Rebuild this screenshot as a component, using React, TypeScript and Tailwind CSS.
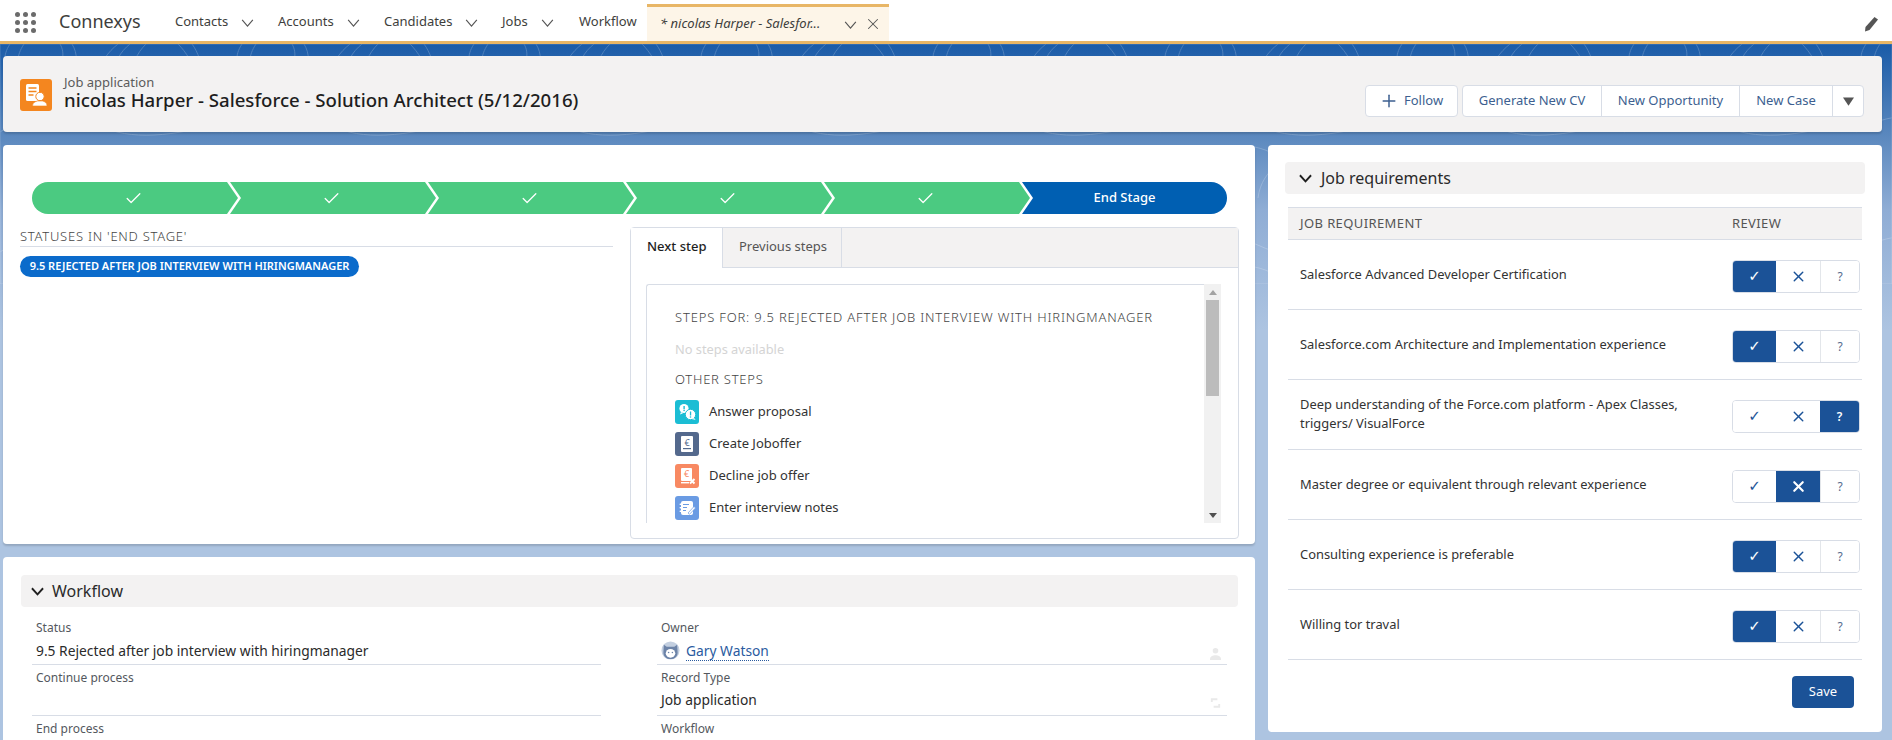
import { Check, X, Plus } from 'lucide-react';

const font = { fontFamily: '"Noto Sans", "Open Sans", sans-serif' };

const navItems = [
  { label: 'Contacts', w: 'w-[103px]' },
  { label: 'Accounts', w: 'w-[106px]' },
  { label: 'Candidates', w: 'w-[118px]' },
  { label: 'Jobs', w: 'w-[77px]' },
];

const requirements = [
  { text: 'Salesforce Advanced Developer Certification', sel: 0 },
  { text: 'Salesforce.com Architecture and Implementation experience', sel: 0 },
  { text: 'Deep understanding of the Force.com platform - Apex Classes, triggers/ VisualForce', sel: 2 },
  { text: 'Master degree or equivalent through relevant experience', sel: 1 },
  { text: 'Consulting experience is preferable', sel: 0 },
  { text: 'Willing tor traval', sel: 0 },
];

function Chevron({ className }: { className?: string }) {
  return (
    <svg viewBox="0 0 14 9" className={className} fill="none" stroke="currentColor">
      <path d="M1 1l6 7 6-7" strokeWidth="1.3" />
    </svg>
  );
}

function SectionChevron() {
  return (
    <svg viewBox="0 0 14 9" className="w-[13px] h-[9px] text-[#1f1f1f]" fill="none" stroke="currentColor">
      <path d="M1 1l6 6.5 6-6.5" strokeWidth="2" />
    </svg>
  );
}

function StepIcon({ kind }: { kind: string }) {
  if (kind === 'answer') {
    return (
      <svg viewBox="0 0 24 24" className="w-6 h-6 shrink-0">
        <rect width="24" height="24" rx="3" fill="#1bbdd4" />
        <circle cx="9" cy="8.5" r="4.6" fill="#fff" />
        <path d="M6 12l-1 2.5 3-1.2z" fill="#fff" />
        <circle cx="15.5" cy="14.500" r="5.2" fill="#fff" stroke="#1bbdd4" />
        <path d="M19 18l1.600 2-3.400-1z" fill="#fff" />
        <rect x="8.400" y="6" width="1.400" height="3" fill="#1bbdd4" />
        <circle cx="9.100" cy="10.400" r=".8" fill="#1bbdd4" />
        <rect x="14.900" y="11.500" width="1.300" height="4" fill="#1bbdd4" />
        <circle cx="15.500" cy="17" r=".8" fill="#1bbdd4" />
      </svg>
    );
  }
  if (kind === 'create') {
    return (
      <svg viewBox="0 0 24 24" className="w-6 h-6 shrink-0">
        <rect width="24" height="24" rx="3" fill="#54698d" />
        <rect x="6" y="4" width="12" height="16" rx="1" fill="#fff" />
        <text x="12" y="13.500" fontSize="9" textAnchor="middle" fill="#54698d" fontFamily="Noto Sans">€</text>
        <rect x="8" y="16" width="8" height="1.200" fill="#54698d" />
      </svg>
    );
  }
  if (kind === 'decline') {
    return (
      <svg viewBox="0 0 24 24" className="w-6 h-6 shrink-0">
        <rect width="24" height="24" rx="3" fill="#f88962" />
        <rect x="6" y="4" width="11" height="13" rx="1" fill="#fff" />
        <text x="11.500" y="13" fontSize="9" textAnchor="middle" fill="#f88962" fontFamily="Noto Sans">€</text>
        <rect x="6" y="18" width="8" height="1.400" fill="#fff" />
        <path d="M15 15l4.500 4.500M19.500 15L15 19.500" stroke="#fff" strokeWidth="2" />
      </svg>
    );
  }
  return (
    <svg viewBox="0 0 24 24" className="w-6 h-6 shrink-0">
      <rect width="24" height="24" rx="3" fill="#6a9be3" />
      <rect x="6" y="5" width="12" height="14" rx="2" fill="#fff" />
      <rect x="4.500" y="7.500" width="3" height="1.500" rx=".7" fill="#fff" />
      <rect x="4.500" y="11" width="3" height="1.500" rx=".7" fill="#fff" />
      <rect x="4.500" y="14.500" width="3" height="1.500" rx=".7" fill="#fff" />
      <path d="M8 8.500h6M8 11.500h4M8 14.500h3" stroke="#6a9be3" strokeWidth="1.200" />
      <path d="M13 17l6-6.500 1.500 1.500-6 6.300z" fill="#fff" stroke="#6a9be3" strokeWidth=".7" />
    </svg>
  );
}

function ReviewButtons({ sel }: { sel: number }) {
  const on = 'bg-[#1b5297] text-white';
  const off = 'bg-white text-[#1b5297]';
  return (
    <div className="flex h-[33px] w-[128px] mt-1 rounded-[4px] border border-[#d8dde6] overflow-hidden shrink-0">
      <div style={{ fontFamily: '"DejaVu Sans", sans-serif' }} className={`w-[43px] flex items-center justify-center text-[15px] ${sel === 0 ? on + ' font-bold' : off}`}>
        ✓
      </div>
      <div className={`w-[44px] flex items-center justify-center ${sel === 1 ? on : off}`}>
        <X size={17} strokeWidth={sel === 1 ? 3 : 2} />
      </div>
      <div className={`flex-1 flex items-center justify-center text-[12px] ${sel === 2 ? on + ' font-semibold' : 'bg-white text-[#54698d] border-l border-[#e3e6ea]'}`}>
        ?
      </div>
    </div>
  );
}

function Field({ label, children, icon, first }: { label: string; children?: React.ReactNode; icon?: React.ReactNode; first?: boolean }) {
  return (
    <div className={`h-[51px] border-b border-[#d8dde6] pl-1 pr-[5px] flex ${first ? 'pt-1' : 'pt-[3px]'}`}>
      <div className="flex-1 min-w-0">
        <div className={`${first ? 'h-5 leading-5' : 'h-[19px] leading-[19px]'} text-[12px] text-[#54585e]`}>{label}</div>
        <div className="h-[25px] leading-[25px] text-[13.800px] text-[#2a2a2a] flex items-center">{children}</div>
      </div>
      {icon}
    </div>
  );
}

export default function App() {
  const stages = [0, 1, 2, 3, 4];
  return (
    <div style={font} className="relative w-[1892px] h-[740px] overflow-hidden bg-[linear-gradient(180deg,#1a5ba8_44px,#5a88be_135px,#8fadd5_210px,#adc4e1_330px)]">
      {/* contour lines of the backdrop */}
      <svg className="absolute left-0 right-0 top-[44px] w-full h-[240px] opacity-[0.2]" fill="none" stroke="#fff" strokeWidth="1">
        <defs>
          <pattern id="contour" width="232" height="120" patternUnits="userSpaceOnUse">
            <path d="M10 0c-8 12-6 22 2 34M24 0c-8 12-8 22 0 34M60 0c6 10 2 22-6 34M72 0c6 10 6 20-2 34M118 0c-10 8-18 18-20 34M130 0c-10 8-16 18-16 34M146 0c-10 10-14 20-12 34M178 0c8 8 16 20 18 34M192 0c6 8 10 20 12 34" />
            <path d="M0 88c30-20 70-20 100-6s70 12 132-6M40 120c14-18 44-24 70-12M150 120c10-14 30-18 50-8" />
          </pattern>
        </defs>
        <rect width="100%" height="100%" fill="url(#contour)" />
      </svg>

      {/* Top nav */}
      <div className="relative h-[44px] bg-white border-b-[3px] border-[#e8b666] flex items-stretch text-[#3e3e3c]">
        <div className="w-[59px] pl-[15px] pt-3 shrink-0">
          <div className="grid grid-cols-3 gap-x-[3px] gap-y-[3px] w-[21px]">
            {[...Array(9)].map((_, i) => (
              <div key={i} className="w-[5px] h-[5px] rounded-full bg-[#6b6b6b]" />
            ))}
          </div>
        </div>
        <div className="w-[116px] text-[18px] leading-[43px] shrink-0">Connexys</div>
        {navItems.map(n => (
          <div key={n.label} className={`${n.w} pt-[3px] text-[13px] flex items-center shrink-0`}>
            <span>{n.label}</span>
            <Chevron className="w-[13px] h-[8px] ml-[13px] mt-[2px] text-[#555]" />
          </div>
        ))}
        <div className="w-[68px] pt-[3px] text-[13px] flex items-center shrink-0">Workflow</div>
        <div className="w-[242px] mt-1 border-t-[3px] border-[#e8b666] bg-[#fdf5e8] flex items-center pl-[13px] shrink-0">
          <span className="w-[184px] text-[13px] italic truncate">* nicolas Harper - Salesfor...</span>
          <Chevron className="w-[13px] h-[8px] mt-[2px] text-[#555]" />
          <X size={18} strokeWidth={1.4} className="ml-[7px] text-[#555]" />
        </div>
        <div className="flex-1 flex justify-end items-center pr-[13px] pt-[6px]">
          <svg viewBox="0 0 16 16" className="w-4 h-4">
            <path d="M11.500 1l3.500 2.500L6.500 14 2 15.500 2.500 11z" fill="#555" />
          </svg>
        </div>
      </div>

      {/* Record header */}
      <div className="relative mt-3 ml-[3px] w-[1879px] h-[76px] bg-[#f3f2f2] rounded-[4px] shadow-[0_2px_2px_rgba(0,0,0,0.15)] flex items-center">
        <div className="ml-[17px] mt-[2px] w-8 h-8 rounded-[3px] bg-[#f4861f] flex items-center justify-center shrink-0">
          <svg viewBox="0 0 32 32" className="w-8 h-8">
            <rect x="6" y="5" width="13" height="17" rx="1.500" fill="#fff" />
            <path d="M8.500 9h8M8.500 12.500h8M8.500 16h5" stroke="#f4861f" strokeWidth="1.400" />
            <circle cx="20" cy="17.500" r="4.200" fill="#fff" stroke="#f4861f" />
            <path d="M12.500 27c0-3.500 3-4.500 5-5h5c2 .5 4.500 1.500 4.500 5z" fill="#fff" stroke="#f4861f" strokeWidth=".6" />
          </svg>
        </div>
        <div className="ml-3 mb-1">
          <div className="text-[13px] leading-[16px] text-[#5b5b5b]">Job application</div>
          <div className="text-[18.600px] leading-[20px] font-medium text-[#1e1e1e] whitespace-nowrap">nicolas Harper - Salesforce - Solution Architect (5/12/2016)</div>
        </div>
        <div className="ml-auto mr-[18px] mt-[13px] flex gap-1 text-[13px] text-[#3d5f90]">
          <div className="h-8 w-[93px] bg-white border border-[#d8dde6] rounded-[4px] flex items-center pl-[13px]">
            <Plus size={20} strokeWidth={1.8} className="mr-[5px]" />
            Follow
          </div>
          <div className="h-8 w-[402px] bg-white border border-[#d8dde6] rounded-[4px] flex items-stretch">
            <div className="w-[139px] flex items-center justify-center border-r border-[#d8dde6]">Generate New CV</div>
            <div className="w-[138px] flex items-center justify-center border-r border-[#d8dde6]">New Opportunity</div>
            <div className="w-[93px] flex items-center justify-center border-r border-[#d8dde6]">New Case</div>
            <div className="flex-1 flex items-center justify-center">
              <svg viewBox="0 0 12 9" className="w-[11px] h-[9px] mt-[2px]"><path d="M0 0h12L6 9z" fill="#555" /></svg>
            </div>
          </div>
        </div>
      </div>

      {/* Body */}
      <div className="relative mt-[13px] ml-[3px] flex gap-[13px] items-start">
        <div className="w-[1252px] flex flex-col gap-[13px] shrink-0">
          <div className="h-[399px] bg-white rounded-[4px] shadow-[0_2px_2px_rgba(0,0,0,0.15)] pt-[37px]">
            {/* Stage path */}
            <div className="flex pl-[29px] text-white text-[13px]">
              {stages.map(i => (
                <div
                  key={i}
                  className={`h-8 w-[206px] -mr-2 pr-[3px] bg-[#4bca81] flex items-center justify-center ${
                    i === 0
                      ? 'rounded-l-full [clip-path:polygon(0_0,calc(100%-11px)_0,100%_50%,calc(100%-11px)_100%,0_100%)]'
                      : '[clip-path:polygon(0_0,calc(100%-11px)_0,100%_50%,calc(100%-11px)_100%,0_100%,11px_50%)]'
                  }`}
                >
                  <Check size={19} strokeWidth={1.6} />
                </div>
              ))}
              <div className="h-8 w-[205px] bg-[#005fb2] rounded-r-full font-medium flex items-center justify-center [clip-path:polygon(0_0,100%_0,100%_100%,0_100%,11px_50%)]">
                End Stage
              </div>
            </div>

            <div className="flex mt-[13px]">
              <div className="ml-[17px] w-[593px] shrink-0">
                <div className="h-5 leading-[19px] border-b border-[#d8dde6] text-[13px] tracking-[0.75px] text-[#444] font-light">STATUSES IN 'END STAGE'</div>
                <div className="mt-[9px] w-[339px] h-[21px] rounded-full bg-[#0b6bcb] text-white text-[11px] font-semibold flex items-center justify-center whitespace-nowrap">
                  9.5 REJECTED AFTER JOB INTERVIEW WITH HIRINGMANAGER
                </div>
              </div>

              <div className="ml-[17px] w-[609px] h-[312px] border border-[#d8dde6] rounded-[4px] shrink-0">
                <div className="h-[40px] bg-[#f3f2f2] border-b border-[#d8dde6] flex text-[13px]">
                  <div className="w-[92px] h-[40px] bg-white flex items-center pl-4 pb-[2px] text-[#1e1e1e] border-r border-[#d8dde6] font-medium">Next step</div>
                  <div className="w-[119px] flex items-center pl-4 pb-[2px] text-[#555] border-r border-[#d8dde6]">Previous steps</div>
                </div>
                <div className="ml-[15px] mt-[16px] flex h-[239px]">
                  <div className="w-[558px] border-l border-t border-[#d8dde6] rounded-tl-[3px] pt-[22px] pl-[28px] overflow-hidden">
                    <div className="h-5 leading-5 text-[13px] tracking-[0.82px] text-[#444] font-light whitespace-nowrap">STEPS FOR: 9.5 REJECTED AFTER JOB INTERVIEW WITH HIRINGMANAGER</div>
                    <div className="mt-3 h-5 leading-5 text-[12.800px] text-[#d4d4d4]">No steps available</div>
                    <div className="mt-[10px] h-5 leading-5 text-[13px] tracking-[0.75px] text-[#444] font-light">OTHER STEPS</div>
                    <div className="mt-[11px] flex flex-col gap-2 text-[13px] text-[#333]">
                      <div className="flex items-center gap-[10px]"><StepIcon kind="answer" />Answer proposal</div>
                      <div className="flex items-center gap-[10px]"><StepIcon kind="create" />Create Joboffer</div>
                      <div className="flex items-center gap-[10px]"><StepIcon kind="decline" />Decline job offer</div>
                      <div className="flex items-center gap-[10px]"><StepIcon kind="notes" />Enter interview notes</div>
                    </div>
                  </div>
                  <div className="w-[17px] bg-[#f1f1f1] flex flex-col items-center">
                    <div className="h-4 flex items-center">
                      <svg viewBox="0 0 8 5" className="w-2 h-[5px]"><path d="M0 5h8L4 0z" fill="#a3a3a3" /></svg>
                    </div>
                    <div className="w-[13px] h-[96px] bg-[#bcbcbc]" />
                    <div className="mt-auto h-4 flex items-center">
                      <svg viewBox="0 0 8 5" className="w-2 h-[5px]"><path d="M0 0h8L4 5z" fill="#505050" /></svg>
                    </div>
                  </div>
                </div>
              </div>
            </div>
          </div>

          {/* Workflow */}
          <div className="h-[240px] bg-white rounded-[4px] pt-[18px] pl-[18px] pr-[17px]">
            <div className="h-8 bg-[#f3f2f2] rounded-[4px] flex items-center pl-[10px] gap-2 text-[16px] text-[#2a2a2a]">
              <SectionChevron />
              Workflow
            </div>
            <div className="mt-[7px] ml-[11px] grid grid-cols-[569px_570px] gap-x-[56px]">
              <div>
                <Field first label="Status">9.5 Rejected after job interview with hiringmanager</Field>
                <Field label="Continue process" />
                <Field label="End process" />
              </div>
              <div>
                <Field
                  first
                  label="Owner"
                  icon={
                    <svg viewBox="0 0 14 16" className="w-[13px] h-[15px] mt-[28px] text-[#e9e9e9]" fill="currentColor">
                      <circle cx="7" cy="5" r="3" />
                      <path d="M1 15c0-4 3-5 6-5s6 1 6 5z" />
                    </svg>
                  }
                >
                  <svg viewBox="0 0 20 20" className="w-[19px] h-[19px] mr-[6px] shrink-0">
                    <circle cx="10" cy="10" r="9.500" fill="#c3cfe0" />
                    <path d="M3 4l3 2h8l3-2 .5 8c0 4-3 7-7.500 7S2.500 16 2.500 12z" fill="#6c83a8" />
                    <ellipse cx="10" cy="13" rx="5" ry="4.500" fill="#fff" />
                    <circle cx="8" cy="12" r=".8" fill="#6c83a8" />
                    <circle cx="12" cy="12" r=".8" fill="#6c83a8" />
                  </svg>
                  <span className="text-[#2a5b9f] leading-[19px] border-b border-dotted border-[#2a5b9f]">Gary Watson</span>
                </Field>
                <Field
                  label="Record Type"
                  icon={
                    <svg viewBox="0 0 14 14" className="w-[13px] h-[14px] mt-[28px] text-[#e9e9e9]" fill="none" stroke="currentColor" strokeWidth="2">
                      <path d="M3 6V3h6M11 8v3H5" />
                    </svg>
                  }
                >
                  Job application
                </Field>
                <Field label="Workflow" />
              </div>
            </div>
          </div>
        </div>

        {/* Job requirements */}
        <div className="w-[614px] h-[587px] bg-white rounded-[4px] pt-[17px] px-[17px] shrink-0">
          <div className="h-8 bg-[#f3f2f2] rounded-[4px] flex items-center pl-[14px] gap-[9px] text-[16px] text-[#2a2a2a]">
            <SectionChevron />
            Job requirements
          </div>
          <div className="mx-[3px] mt-[13px]">
            <div className="h-[33px] bg-[#f3f2f2] border-y border-[#d8dde6] flex items-center text-[13px] tracking-[0.4px] text-[#555]">
              <div className="pl-3 flex-1">JOB REQUIREMENT</div>
              <div className="w-[130px]">REVIEW</div>
            </div>
            {requirements.map(r => (
              <div key={r.text} className="h-[70px] border-b border-[#d8dde6] pl-3 pr-[2px] flex items-center">
                <div className="flex-1 pr-[50px] text-[12.900px] leading-[19px] text-[#333] mb-[1px]">{r.text}</div>
                <ReviewButtons sel={r.sel} />
              </div>
            ))}
            <div className="mt-4 pr-2 flex justify-end">
              <div className="w-[62px] h-8 bg-[#1b5297] rounded-[4px] text-white text-[13px] flex items-center justify-center">Save</div>
            </div>
          </div>
        </div>
      </div>
    </div>
  );
}
